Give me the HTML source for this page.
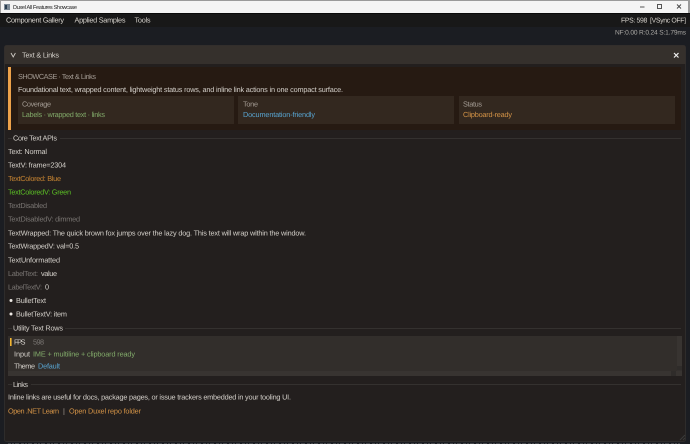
<!DOCTYPE html>
<html><head><meta charset="utf-8"><title>Duxel All Features Showcase</title>
<style>
html,body{margin:0;padding:0;background:#1b1d22;width:690px;height:444px;overflow:hidden}
svg{display:block}
text{font-family:"Liberation Sans",sans-serif;font-size:7.3px;fill:#d4d0ca;text-rendering:geometricPrecision;white-space:pre}
.d{fill:#797572}
.g{fill:#82ab6a}
.b{fill:#58a4d0}
.o{fill:#d59447}
.s{fill:#a49c94}
</style></head>
<body>
<svg width="690" height="444" viewBox="0 0 690 444" xmlns="http://www.w3.org/2000/svg">
<rect width="690" height="444" fill="#1b1d22"/>
<!-- title bar -->
<rect width="690" height="13" fill="#f4f4f4"/>
<rect width="690" height="1" fill="#9a9a9a"/>
<rect x="0" y="1" width="1" height="12" fill="#9a9a9a"/>
<rect x="688" y="1" width="2" height="12" fill="#9a9a9a"/>
<rect x="4" y="4" width="6" height="6" fill="#7d8a96"/>
<rect x="5" y="5" width="2" height="4" fill="#2c3e50"/>
<text x="13" y="9.200" style="font-size:5.600px;fill:#222" textLength="64">Duxel All Features Showcase</text>
<rect x="640" y="6.500" width="4.500" height="1" fill="#555"/>
<rect x="657.500" y="4.500" width="4" height="4" fill="none" stroke="#444" stroke-width="0.9"/>
<path d="M677 4.500l4 4M681 4.500l-4 4" stroke="#444" stroke-width="0.9" fill="none"/>
<!-- menu -->
<rect y="13" width="690" height="1" fill="#0a0a0a"/>
<rect y="14" width="690" height="13" fill="#181818"/>
<text x="6" y="22.600" textLength="58">Component Gallery</text>
<text x="74.500" y="22.600" textLength="51">Applied Samples</text>
<text x="134.500" y="22.600" textLength="16">Tools</text>
<text x="621" y="22.600" textLength="65" style="font-size:6.900px">FPS: 598  [VSync OFF]</text>
<text x="615" y="34.600" textLength="71" style="fill:#aaa8a4;font-size:6.600px">NF:0.00 R:0.24 S:1.79ms</text>
<!-- window -->
<rect x="4.500" y="45.500" width="681" height="396" rx="2" fill="#231f1e" stroke="#2e2c2b" stroke-width="1"/>
<path d="M4.500 64V47.500a2 2 0 0 1 2-2H683.500a2 2 0 0 1 2 2V64z" fill="#35302c"/>
<path d="M11 53l2.200 4 2.200-4" fill="none" stroke="#cfcbc5" stroke-width="0.9"/>
<text x="22" y="57.600" textLength="37">Text &amp; Links</text>
<path d="M674 53l4.500 4.500M678.500 53L674 57.500" stroke="#f0f0f0" stroke-width="1.200" fill="none"/>
<!-- banner -->
<rect x="8" y="67" width="673" height="63" fill="#261a12"/>
<rect x="8" y="67" width="3" height="63" fill="#eda24a"/>
<text x="18" y="79.100" class="s" textLength="78">SHOWCASE · Text &amp; Links</text>
<text x="18" y="92.100" textLength="325">Foundational text, wrapped content, lightweight status rows, and inline link actions in one compact surface.</text>
<rect x="18" y="96" width="216" height="28" fill="#33281f"/>
<rect x="238" y="96" width="216" height="28" fill="#33281f"/>
<rect x="459" y="96" width="216" height="28" fill="#33281f"/>
<text x="22" y="106.600" class="s" textLength="29">Coverage</text>
<text x="22" y="117.100" class="g" textLength="83">Labels · wrapped text · links</text>
<text x="243" y="106.600" class="s" textLength="15">Tone</text>
<text x="243" y="117.100" class="b" textLength="72">Documentation-friendly</text>
<text x="463" y="106.600" class="s" textLength="19">Status</text>
<text x="463" y="117.100" class="o" textLength="49">Clipboard-ready</text>
<!-- core -->
<rect x="8" y="138" width="4" height="1" fill="#34312f"/>
<rect x="60" y="138" width="621" height="1" fill="#34312f"/>
<text x="13" y="140.600" textLength="44">Core Text APIs</text>
<text x="8" y="154.100" textLength="39">Text: Normal</text>
<text x="8" y="167.600" textLength="58">TextV: frame=2304</text>
<text x="8" y="181.100" style="fill:#ca8632" textLength="53">TextColored: Blue</text>
<text x="8" y="194.600" style="fill:#5cc225" textLength="63">TextColoredV: Green</text>
<text x="8" y="208.100" class="d" textLength="39">TextDisabled</text>
<text x="8" y="221.600" class="d" textLength="72">TextDisabledV: dimmed</text>
<text x="8" y="235.600" textLength="298">TextWrapped: The quick brown fox jumps over the lazy dog. This text will wrap within the window.</text>
<text x="8" y="248.600" textLength="71">TextWrappedV: val=0.5</text>
<text x="8" y="262.600" textLength="52">TextUnformatted</text>
<text x="8" y="276.100" class="d" textLength="30">LabelText:</text>
<text x="41" y="276.100" textLength="16">value</text>
<text x="8" y="289.600" class="d" textLength="34">LabelTextV:</text>
<text x="45" y="289.600" textLength="3.500">0</text>
<circle cx="11" cy="300.500" r="1.500" fill="#eeeae5"/>
<text x="16" y="303.100" textLength="30">BulletText</text>
<circle cx="11" cy="314" r="1.500" fill="#eeeae5"/>
<text x="16" y="316.600" textLength="51">BulletTextV: item</text>
<!-- utility -->
<rect x="8" y="328" width="4" height="1" fill="#34312f"/>
<rect x="65" y="328" width="616" height="1" fill="#34312f"/>
<text x="13" y="330.600" textLength="50">Utility Text Rows</text>
<rect x="8" y="336" width="674" height="40" fill="#322e2b"/>
<rect x="10" y="338" width="1.600" height="8" fill="#f2b632"/>
<text x="14" y="344.600" textLength="11.500">FPS</text>
<text x="33" y="344.600" class="d" textLength="11">598</text>
<text x="14" y="356.600" textLength="16">Input</text>
<text x="33" y="356.600" class="g" textLength="102">IME + multiline + clipboard ready</text>
<text x="14" y="368.600" textLength="21">Theme</text>
<text x="38" y="368.600" class="b" textLength="22">Default</text>
<rect x="677" y="336" width="5" height="40" fill="#383431"/>
<rect x="8" y="371" width="674" height="5" fill="#383431"/>
<rect x="677" y="366" width="5" height="4.500" fill="#2f2c2a"/>
<rect x="671" y="371" width="5" height="5" fill="#2f2c2a"/>
<!-- links -->
<rect x="8" y="384" width="4" height="1" fill="#34312f"/>
<rect x="31" y="384" width="650" height="1" fill="#34312f"/>
<text x="13" y="387.100" textLength="15">Links</text>
<text x="8" y="399.600" textLength="283">Inline links are useful for docs, package pages, or issue trackers embedded in your tooling UI.</text>
<text x="8" y="413.600" class="o" textLength="51">Open .NET Learn</text>
<text x="63" y="413.600" class="s">|</text>
<text x="69" y="413.600" class="o" textLength="72">Open Duxel repo folder</text>
<path d="M680 440l5-5M683 440l2-2" stroke="#3a3a3a" stroke-width="1"/>
<path d="M8 443.500H680" stroke="#45474b" stroke-width="1" stroke-dasharray="3 1 2 1 4 2"/>
</svg>
</body></html>
